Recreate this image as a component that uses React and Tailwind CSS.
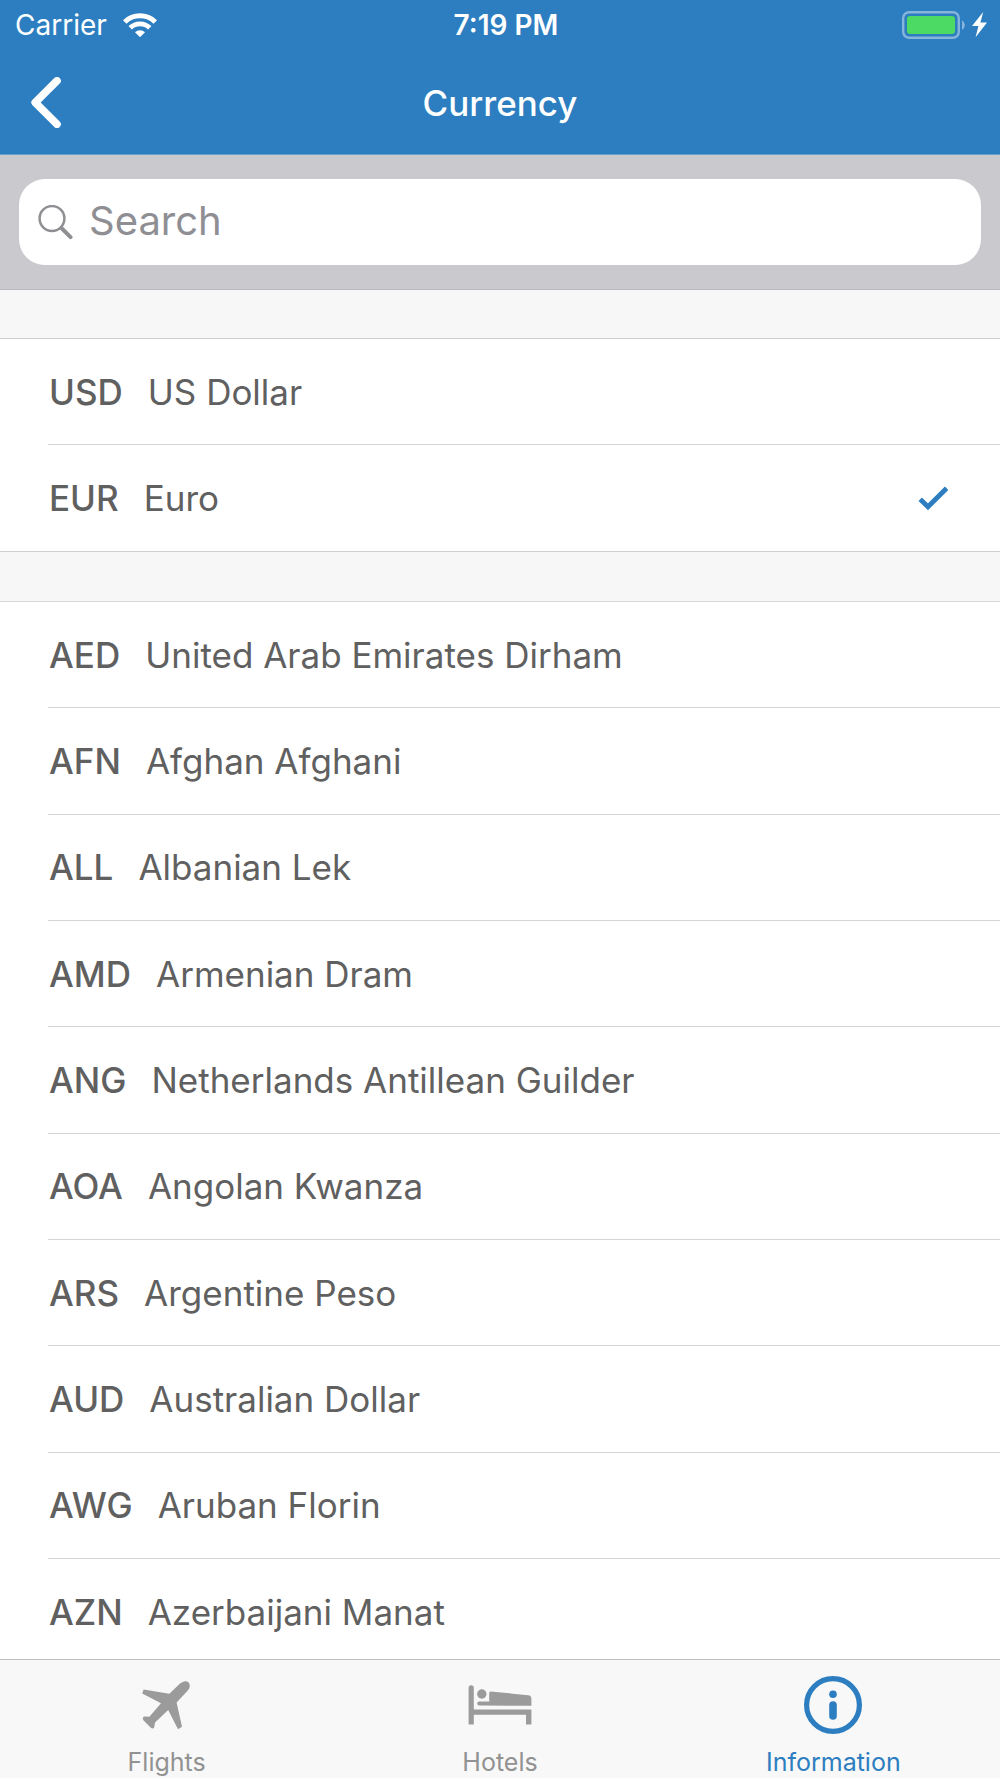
const pinned = [
  { code: "USD", name: "US Dollar" },
  { code: "EUR", name: "Euro" },
];

const currencies = [
  { code: "AED", name: "United Arab Emirates Dirham" },
  { code: "AFN", name: "Afghan Afghani" },
  { code: "ALL", name: "Albanian Lek" },
  { code: "AMD", name: "Armenian Dram" },
  { code: "ANG", name: "Netherlands Antillean Guilder" },
  { code: "AOA", name: "Angolan Kwanza" },
  { code: "ARS", name: "Argentine Peso" },
  { code: "AUD", name: "Australian Dollar" },
  { code: "AWG", name: "Aruban Florin" },
  { code: "AZN", name: "Azerbaijani Manat" },
];

function WifiIcon() {
  return (
    <svg className="h-6 w-[34px]" viewBox="0 0 34 24" fill="none" stroke="#fff" aria-hidden="true">
      <path d="M1.7 9a22 22 0 0 1 30.6 0" strokeWidth="5" />
      <path d="M7.2 14.8a14 14 0 0 1 19.6 0" strokeWidth="4.8" />
      <path d="M17 24.2 12 19.2a7.4 7.4 0 0 1 10 0z" fill="#fff" stroke="none" />
    </svg>
  );
}

function BatteryIcon() {
  return (
    <svg className="h-7 w-[86px]" viewBox="0 0 86 28" aria-label="Battery charging" role="img">
      <rect x="1.2" y="1.2" width="55.6" height="25.6" rx="6" fill="none" stroke="#85b4dc" strokeWidth="2.4" />
      <rect x="5" y="5" width="48" height="18" rx="3" fill="#4cd964" />
      <path d="M60 9.2a5.6 5.6 0 0 1 0 9.8z" fill="#85b4dc" />
      <path d="M81.2 1 70 15h6.400l-2.800 11.200L85 11.400h-6.600z" fill="#fff" />
    </svg>
  );
}

function BackIcon() {
  return (
    <svg className="h-[51px] w-[30px]" viewBox="0 0 30 51" fill="none" aria-hidden="true">
      <path d="M26 3.800 4.200 25.500 26 47.200" stroke="#fff" strokeWidth="7.600" strokeLinecap="round" strokeLinejoin="round" />
    </svg>
  );
}

function SearchIcon() {
  return (
    <svg className="h-[35px] w-[35px] shrink-0" viewBox="0 0 35 35" fill="none" stroke="#8e8e93" aria-hidden="true">
      <circle cx="14" cy="13.500" r="12.400" strokeWidth="2.500" />
      <path d="m23.500 23.200 9 9" strokeWidth="4" strokeLinecap="round" />
    </svg>
  );
}

function CheckIcon() {
  return (
    <svg className="h-6 w-[31px]" viewBox="0 0 31 24" fill="none" aria-hidden="true">
      <path d="m2.200 13.200 7.800 7.600L28.600 2.200" stroke="#2d7ec0" strokeWidth="4.800" />
    </svg>
  );
}

function PlaneIcon() {
  return (
    <svg className="h-[50px] w-[50px]" viewBox="0 0 50 50" fill="#9b9b9b" aria-hidden="true">
      <path d="M38 3.600c2.800-2.400 6.200-3.400 8.400-1.400 2.200 2.200 1.600 6-.8 8.600L34.600 22.400 40 46.800 36 49.200 26.200 30 13 42.400l-.8 5.200c-.8 1.200-2.400 1.200-3.400.2L1.400 40.200c-1-1.400-.6-3 .8-3.600l5.200.2 11.600-13.600L.2 13.400 1.600 9.400 27.400 13.800z" />
    </svg>
  );
}

function BedIcon() {
  return (
    <svg className="h-[50px] w-[64px]" viewBox="0 0 64 50" fill="#9b9b9b" aria-hidden="true">
      <path d="M.6 7.800a2.600 2.600 0 0 1 5.200 0V29.600H63.400v15H58V34.800H5.800V44.600H.6z" />
      <circle cx="13.800" cy="14" r="4.700" />
      <path d="M11.200 25.600a2 2 0 0 1 0-4h10V13a1.500 1.500 0 0 1 1.500-1.500L60 15.200a3.500 3.500 0 0 1 3.400 3.500v7z" />
    </svg>
  );
}

function InfoIcon() {
  return (
    <svg className="h-[58px] w-[58px]" viewBox="0 0 58 58" aria-hidden="true">
      <circle cx="29" cy="29" r="26.400" fill="none" stroke="#2d7ec0" strokeWidth="5.200" />
      <circle cx="29" cy="18.200" r="3.800" fill="#2d7ec0" />
      <rect x="25.200" y="25.200" width="7.600" height="18.600" rx="3.800" fill="#2d7ec0" />
    </svg>
  );
}

function CurrencyRow({ currency, selected }) {
  return (
    <li className="flex min-h-[106px] flex-1 pl-12">
      <button
        type="button"
        aria-pressed={selected}
        className="flex flex-1 items-center justify-between border-b border-[#d4d4d7] pr-[51px] pl-px text-left text-[35px] leading-10 text-[#606060] [li:last-child>&]:border-b-0"
      >
        <span className="flex gap-[25px]">
          <span className="font-medium">{currency.code}</span>
          <span>{currency.name}</span>
        </span>
        {selected && <CheckIcon />}
      </button>
    </li>
  );
}

function Tab({ label, icon, active }) {
  return (
    <a
      href={"#" + label.toLowerCase()}
      aria-current={active ? "page" : undefined}
      className={
        "flex flex-1 flex-col items-center text-[25px] leading-8 " +
        (active ? "text-[#2d7ec0]" : "text-[#929292]")
      }
    >
      <span className="flex h-[58px] items-center">{icon}</span>
      <span className="mt-3">{label}</span>
    </a>
  );
}

export default function App() {
  return (
    <div className="flex min-h-screen flex-col bg-[#f7f7f7] pb-[113px] font-['Inter','Liberation_Sans',sans-serif]">
      <header className="border-b border-[#6aa0cd] bg-[#2d7ec0] text-white">
        <div className="grid h-[50px] grid-cols-3 items-center px-3 text-[28px] leading-8">
          <div className="flex items-center gap-4 pl-[3px]">
            <span>Carrier</span>
            <WifiIcon />
          </div>
          <span className="pl-3 text-center font-semibold">7:19 PM</span>
          <div className="flex justify-end">
            <BatteryIcon />
          </div>
        </div>
        <div className="grid h-26 grid-cols-3 items-center px-[31px]">
          <button type="button" aria-label="Back" className="w-[30px]">
            <BackIcon />
          </button>
          <h1 className="pt-0.5 text-center text-[35px] leading-10 font-medium">Currency</h1>
        </div>
      </header>

      <div className="border-b border-[#b9b9bd] bg-[#c9c9ce] px-[19px] py-6">
        <label className="flex h-[86px] items-center gap-4 rounded-[26px] bg-white px-[19px]">
          <SearchIcon />
          <input
            type="search"
            aria-label="Search"
            placeholder="Search"
            className="min-w-0 flex-1 bg-transparent pb-0.5 text-[40px] leading-12 text-[#606060] outline-none placeholder:text-[#8e8e93]"
          />
        </label>
      </div>

      <ul className="mt-12 flex flex-col border-y border-[#cfcfd1] bg-white">
        {pinned.map((c) => (
          <CurrencyRow key={c.code} currency={c} selected={c.code === "EUR"} />
        ))}
      </ul>

      <ul className="mt-[49px] flex flex-1 flex-col border-t border-[#d8d8da] bg-white">
        {currencies.map((c) => (
          <CurrencyRow key={c.code} currency={c} selected={false} />
        ))}
      </ul>

      <nav className="fixed inset-x-0 bottom-0 flex border-t border-[#bfbfc1] bg-[#f8f8f8] pt-4">
        <Tab label="Flights" icon={<PlaneIcon />} />
        <Tab label="Hotels" icon={<BedIcon />} />
        <Tab label="Information" icon={<InfoIcon />} active />
      </nav>
    </div>
  );
}
